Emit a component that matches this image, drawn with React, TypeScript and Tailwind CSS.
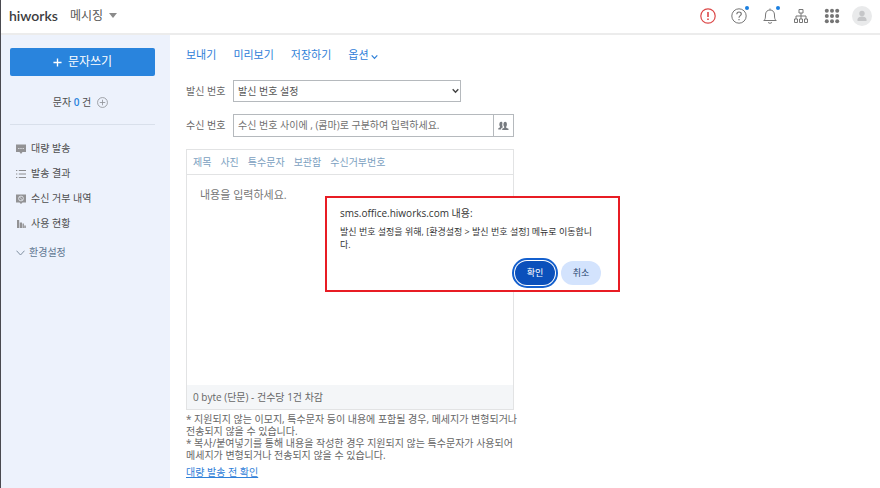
import React from 'react';
import clsx from 'clsx';

const toolbarActions = ['보내기', '미리보기', '저장하기'];
const editorTabs = ['제목', '사진', '특수문자', '보관함', '수신거부번호'];

const ChatIcon = () => (
  <svg viewBox="0 0 10 10" className="size-[10px]">
    <path d="M0 .5h10v7.500H6.500L5 10 3.500 8H0z" fill="#929294" />
    <path d="M2.200 4.500h1.200M4.400 4.500h1.200M6.600 4.500h1.200" stroke="#e6e9ee" strokeWidth="1" />
  </svg>
);

const ListIcon = () => (
  <svg viewBox="0 0 10 10" className="size-[10px]">
    <path d="M0 1.500h1.300M0 5h1.300M0 8.500h1.300M2.800 1.500H10M2.800 5H10M2.800 8.500H10" stroke="#8c8c8e" strokeWidth="1" />
  </svg>
);

const BlockIcon = () => (
  <svg viewBox="0 0 10 10" className="size-[10px]">
    <path d="M0 .5h10v8H6.500L5 10 3.500 8.500H0z" fill="#929294" />
    <circle cx="5" cy="4.500" r="2.400" fill="none" stroke="#edf1f8" strokeWidth=".8" />
    <path d="m3.400 2.900 3.200 3.200" stroke="#edf1f8" strokeWidth=".8" />
  </svg>
);

const ChartIcon = () => (
  <svg viewBox="0 0 10 10" className="size-[10px]">
    <path d="M1 1h2.200v8H1zM3.800 3.500H6V9H3.800zM6.500 4.500h1.400V9H6.500zM8.300 6.500h1.500V9H8.300z" fill="#929294" />
  </svg>
);

const menuItems = [
  { label: '대량 발송', icon: <ChatIcon /> },
  { label: '발송 결과', icon: <ListIcon /> },
  { label: '수신 거부 내역', icon: <BlockIcon /> },
  { label: '사용 현황', icon: <ChartIcon /> },
];

const IconButton: React.FC<{ label: string; dot?: boolean; children: React.ReactNode }> = ({
  label,
  dot,
  children,
}) => (
  <button type="button" aria-label={label} className="relative flex size-4 items-center justify-center">
    {children}
    {dot && <span className="absolute -top-[2px] -right-[2px] size-1 rounded-full bg-[#1a7fe0]" />}
  </button>
);

const Header: React.FC = () => (
  <header className="flex h-[35px] shrink-0 items-center justify-between border-b-2 border-[#ececec] bg-white px-2 pb-[2px]">
    <div className="flex items-center gap-3">
      <a href="#" className="font-['Lato',sans-serif] text-sm font-semibold text-[#3c3c3e]">
        hiworks
      </a>
      <button type="button" className="flex items-center gap-[6px] text-xs text-[#555]">
        메시징
        <svg viewBox="0 0 8 5" className="h-[5px] w-2">
          <path d="M0 0h8L4 5z" fill="#8b8b8b" />
        </svg>
      </button>
    </div>

    <div className="flex items-center gap-3">
      <div className="flex items-center gap-[15px]">
        <IconButton label="공지">
          <svg viewBox="0 0 16 16" className="size-4" fill="none" stroke="#dc4848">
            <circle cx="8" cy="8" r="7.200" strokeWidth="1.200" />
            <path d="M8 4v5M8 10.500v1.500" strokeWidth="1.600" />
          </svg>
        </IconButton>
        <IconButton label="도움말" dot>
          <svg viewBox="0 0 16 16" className="size-4" fill="none" stroke="#777">
            <circle cx="8" cy="8" r="7.200" strokeWidth="1" />
            <path d="M5.800 6.300c0-3 4.500-3 4.500-.3C10.300 7.600 8 7.700 8 9.700M8 11v1.300" strokeWidth="1.200" />
          </svg>
        </IconButton>
        <IconButton label="알림" dot>
          <svg viewBox="0 0 16 16" className="size-4" fill="none" stroke="#777" strokeWidth="1">
            <path
              d="M8 .5v1.300M1.800 12.500c1.400-1.100 1.700-2.300 1.700-5.500 0-3.300 1.900-5 4.500-5s4.500 1.700 4.500 5c0 3.200.3 4.400 1.700 5.500z"
              strokeLinejoin="round"
            />
            <path d="M6 14.200c.8 1.400 3.200 1.400 4 0" />
          </svg>
        </IconButton>
        <IconButton label="조직도">
          <svg viewBox="0 0 16 16" className="size-4" fill="none" stroke="#777" strokeWidth="1">
            <path d="M6 1.500h4v3.500H6zM1.500 11h3v3.500h-3zM6.500 11h3v3.500h-3zM11.500 11h3v3.500h-3zM8 5v6M3 11V8h10v3" />
          </svg>
        </IconButton>
        <IconButton label="전체 메뉴">
          <svg viewBox="0 0 16 16" className="size-4" fill="#757575">
            {[2.8, 8, 13.2].map((y) =>
              [2.8, 8, 13.2].map((x) => <circle key={`${x}-${y}`} cx={x} cy={y} r="2" />),
            )}
          </svg>
        </IconButton>
      </div>
      <button type="button" aria-label="내 프로필">
        <svg viewBox="0 0 20 20" className="size-5">
          <circle cx="10" cy="10" r="10" fill="#e9eaeb" />
          <circle cx="10" cy="7.500" r="2.700" fill="#c5c6c8" />
          <path d="M5.500 15v-1.500c0-4 9-4 9 0V15z" fill="#c5c6c8" />
        </svg>
      </button>
    </div>
  </header>
);

const Sidebar: React.FC = () => (
  <aside className="w-[169px] shrink-0 bg-[#edf2fc] pt-[13px] pr-[15px] pl-[9px] text-[#4c4c4c]">
    <button
      type="button"
      className="flex h-7 w-full items-center justify-center gap-[6px] rounded-xs bg-[#2984dd] text-xs text-white"
    >
      <svg viewBox="0 0 10 10" className="size-[9px]">
        <path d="M5 .5v9M.5 5h9" stroke="currentColor" strokeWidth="1.500" />
      </svg>
      문자쓰기
    </button>

    <div className="flex h-[49px] items-center justify-center gap-[6px] border-b border-[#d9e0eb] pt-1 pr-1">
      <span>
        문자 <b className="font-semibold text-[#2984dd]">0</b> 건
      </span>
      <button type="button" aria-label="충전">
        <svg viewBox="0 0 12 12" className="size-[11px]" fill="none" stroke="#8f9296">
          <circle cx="6" cy="6" r="5.400" strokeWidth=".9" />
          <path d="M6 3v6M3 6h6" strokeWidth=".9" />
        </svg>
      </button>
    </div>

    <nav className="pt-[11px] pl-[6px]">
      {menuItems.map((item) => (
        <a key={item.label} href="#" className="flex h-[25px] items-center gap-[5px]">
          {item.icon}
          {item.label}
        </a>
      ))}
      <button type="button" className="mt-1 flex h-[25px] items-center gap-1 text-[#5f7792]">
        <svg viewBox="0 0 9 6" className="h-[6px] w-[9px]">
          <path d="M.5.700 4.500 5l4-4.300" fill="none" stroke="#8090a0" />
        </svg>
        환경설정
      </button>
    </nav>
  </aside>
);

const MessageForm: React.FC = () => (
  <main className="min-w-0 flex-1 px-4 pt-3 text-[#666]">
    <div className="flex h-4 items-center gap-[17px] text-[11px] text-[#2f80d8]">
      {toolbarActions.map((label) => (
        <button key={label} type="button">
          {label}
        </button>
      ))}
      <button type="button" className="flex items-center gap-[2px]">
        옵션
        <svg viewBox="0 0 7 6" className="mt-1 h-[6px] w-[7px]">
          <path d="M.7 1.300 3.500 4.300l2.800-3" fill="none" stroke="currentColor" strokeWidth="1.200" />
        </svg>
      </button>
    </div>

    <form className="max-w-[328px]">
      <div className="mt-[17px] flex items-center">
        <label htmlFor="sender" className="w-[47px] shrink-0">
          발신 번호
        </label>
        <div className="relative w-[228px]">
          <select
            id="sender"
            className="block h-[22px] w-full appearance-none border border-[#b5b9bd] bg-white px-1 text-[#555]"
          >
            <option>발신 번호 설정</option>
          </select>
          <svg viewBox="0 0 7 6" className="pointer-events-none absolute top-2 right-[2px] h-[6px] w-[7px]">
            <path d="M.7 1.300 3.500 4.300l2.800-3" fill="none" stroke="#444" strokeWidth="1.400" />
          </svg>
        </div>
      </div>

      <div className="mt-3 flex items-center">
        <label htmlFor="receiver" className="w-[47px] shrink-0">
          수신 번호
        </label>
        <div className="flex h-[23px] min-w-0 flex-1 border border-[#b5b9bd]">
          <input
            id="receiver"
            type="text"
            placeholder="수신 번호 사이에 , (콤마)로 구분하여 입력하세요."
            className="min-w-0 flex-1 px-1 placeholder:text-[#707070]"
          />
          <button
            type="button"
            aria-label="주소록"
            className="flex w-5 items-center justify-center border-l border-[#b5b9bd]"
          >
            <svg viewBox="0 0 11 10" className="h-[10px] w-[11px]" fill="#777b80">
              <path d="M4.200 9V7.800l2-1V5.700C5 4.500 5.200.8 7.200.8s2.200 3.700 1 4.900v1.100l2.300 1V9z" />
              <path d="M.3 8.500V7.300l1.600-.8V5.300C1 4.300 1.200.8 3 .8c.8 0 1.300.5 1.500 1.200-.5 1.400-.3 2.800.4 4.200L3.200 7.300v1.200z" />
            </svg>
          </button>
        </div>
      </div>

      <div className="mt-3 border border-[#e2e3e4]">
        <div className="flex h-[25px] items-center gap-[9px] border-b border-[#e2e3e4] px-[6px] text-[#7ba0c0]">
          {editorTabs.map((tab) => (
            <button key={tab} type="button">
              {tab}
            </button>
          ))}
        </div>
        <textarea
          aria-label="내용"
          placeholder="내용을 입력하세요."
          className="block h-[210px] w-full resize-none px-[13px] py-3 text-[11px] leading-4 placeholder:text-[#777]"
        />
        <p className="flex h-6 items-center bg-[#f4f6f8] px-[6px]">0 byte (단문) - 건수당 1건 차감</p>
      </div>
    </form>

    <div className="mt-[3px] leading-[12px]">
      <p>
        * 지원되지 않는 이모지, 특수문자 등이 내용에 포함될 경우, 메세지가 변형되거나
        <br />
        전송되지 않을 수 있습니다.
      </p>
      <p>
        * 복사/붙여넣기를 통해 내용을 작성한 경우 지원되지 않는 특수문자가 사용되어
        <br />
        메세지가 변형되거나 전송되지 않을 수 있습니다.
      </p>
    </div>
    <a href="#" className="mt-1 inline-block text-[#2f80d8] underline">
      대량 발송 전 확인
    </a>
  </main>
);

const pill = 'h-6 w-10 rounded-full text-[9px]';

const ConfirmDialog: React.FC = () => (
  <div
    role="dialog"
    aria-labelledby="dialog-title"
    className="absolute top-[196px] left-[324px] w-[295px] border-2 border-[#e81c24] bg-white px-[13px] pt-[7px] pb-[5px] text-[#333]"
  >
    <h2 id="dialog-title" className="text-[10px] leading-4">
      sms.office.hiworks.com 내용:
    </h2>
    <p className="mt-1 pr-2 text-[9px] leading-[13px] break-all">
      발신 번호 설정을 위해, [환경설정 &gt; 발신 번호 설정] 메뉴로 이동합니다.
    </p>
    <div className="mt-[10px] flex justify-end gap-[6px] pr-1">
      <button
        type="button"
        className={clsx(pill, 'bg-[#0b50bb] text-white outline-2 outline-offset-1 outline-[#1460ce]')}
      >
        확인
      </button>
      <button type="button" className={clsx(pill, 'bg-[#d3e3fd] text-[#26436f]')}>
        취소
      </button>
    </div>
  </div>
);

export default function App() {
  return (
    <div className="relative flex min-h-screen flex-col border-l border-[#4a4a50] bg-white font-['Open_Sans','Noto_Sans_CJK_KR',sans-serif] text-[10px]">
      <Header />
      <div className="flex flex-1">
        <Sidebar />
        <MessageForm />
      </div>
      <ConfirmDialog />
    </div>
  );
}
